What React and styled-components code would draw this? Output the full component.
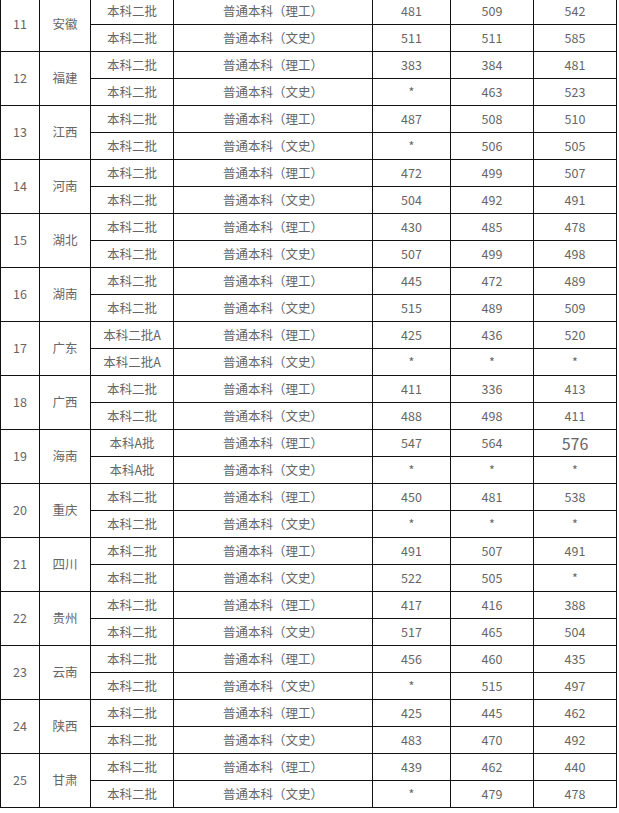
import React from "react";
import styled, { createGlobalStyle } from "styled-components";

const GlobalStyle = createGlobalStyle`
  html, body {
    margin: 0;
    padding: 0;
    background: #fff;
  }
`;

const rows = [
  ["11", "安徽", "本科二批", ["481", "509", "542"], "本科二批", ["511", "511", "585"]],
  ["12", "福建", "本科二批", ["383", "384", "481"], "本科二批", ["*", "463", "523"]],
  ["13", "江西", "本科二批", ["487", "508", "510"], "本科二批", ["*", "506", "505"]],
  ["14", "河南", "本科二批", ["472", "499", "507"], "本科二批", ["504", "492", "491"]],
  ["15", "湖北", "本科二批", ["430", "485", "478"], "本科二批", ["507", "499", "498"]],
  ["16", "湖南", "本科二批", ["445", "472", "489"], "本科二批", ["515", "489", "509"]],
  ["17", "广东", "本科二批A", ["425", "436", "520"], "本科二批A", ["*", "*", "*"]],
  ["18", "广西", "本科二批", ["411", "336", "413"], "本科二批", ["488", "498", "411"]],
  ["19", "海南", "本科A批", ["547", "564", "576"], "本科A批", ["*", "*", "*"]],
  ["20", "重庆", "本科二批", ["450", "481", "538"], "本科二批", ["*", "*", "*"]],
  ["21", "四川", "本科二批", ["491", "507", "491"], "本科二批", ["522", "505", "*"]],
  ["22", "贵州", "本科二批", ["417", "416", "388"], "本科二批", ["517", "465", "504"]],
  ["23", "云南", "本科二批", ["456", "460", "435"], "本科二批", ["*", "515", "497"]],
  ["24", "陕西", "本科二批", ["425", "445", "462"], "本科二批", ["483", "470", "492"]],
  ["25", "甘肃", "本科二批", ["439", "462", "440"], "本科二批", ["*", "479", "478"]],
];

const widths = [39, 51, 83, 199, 78, 83, 83];

const Table = styled.table`
  border-collapse: collapse;
  table-layout: fixed;
  width: 617px;
  margin-top: -3px;
  font-family: "Noto Sans CJK SC", "Microsoft YaHei", sans-serif;
  font-size: 12.5px;
  color: #666;
`;

const Row = styled.tr`
  height: 27px;
`;

const Cell = styled.td`
  border: 1px solid #111;
  padding: 0;
  text-align: center;
  vertical-align: middle;
  line-height: 1;
  font-size: ${(p) => (p.$big ? "16px" : "12.5px")};
`;

function App() {
  return (
    <>
      <GlobalStyle />
      <Table>
        <colgroup>
          {widths.map((w, i) => (
            <col key={i} style={{ width: w }} />
          ))}
        </colgroup>
        <tbody>
          {rows.map(([no, prov, b1, s1, b2, s2]) => (
            <React.Fragment key={no}>
              <Row>
                <Cell rowSpan={2}>{no}</Cell>
                <Cell rowSpan={2}>{prov}</Cell>
                <Cell>{b1}</Cell>
                <Cell>普通本科（理工）</Cell>
                {s1.map((s, i) => (
                  <Cell key={i} $big={s === "576"}>{s}</Cell>
                ))}
              </Row>
              <Row>
                <Cell>{b2}</Cell>
                <Cell>普通本科（文史）</Cell>
                {s2.map((s, i) => (
                  <Cell key={i}>{s}</Cell>
                ))}
              </Row>
            </React.Fragment>
          ))}
        </tbody>
      </Table>
    </>
  );
}

export default App;
